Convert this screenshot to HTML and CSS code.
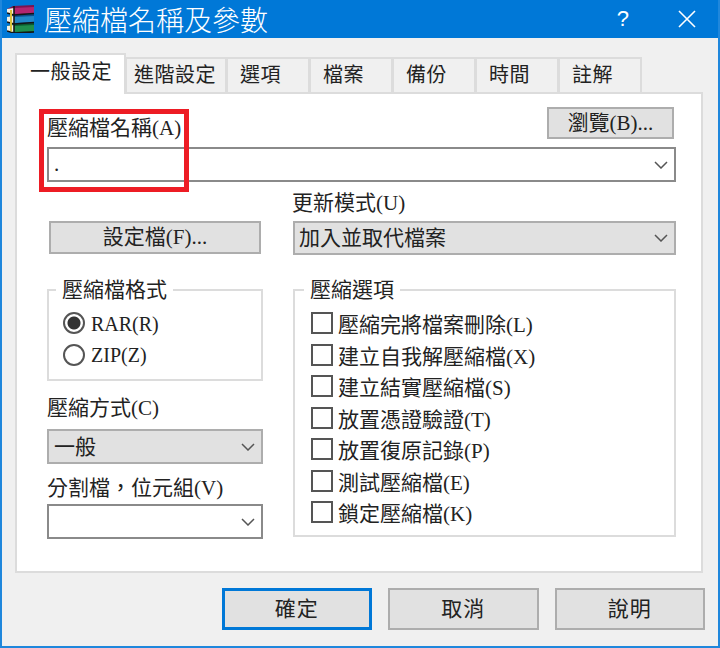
FILE: index.html
```html
<!DOCTYPE html>
<html lang="zh-Hant">
<head>
    <meta charset="UTF-8">
    <title>壓縮檔名稱及參數</title>
    <link rel="stylesheet" href="styles.css">
</head>
<body>
    <div class="window">
        <!-- Title bar -->
        <div class="titlebar">
            <svg class="app-icon" viewBox="0 0 28 28" width="28" height="28">
                <path d="M0 4 L6 1 L27 0 L27 8 L7 10 L0 8 Z" fill="#7c1450"/>
                <path d="M7 3 L27 2 L27 8 L7 9 Z" fill="#b3256f"/>
                <path d="M0 12 L7 10 L27 9 L27 18 L7 19 L0 17 Z" fill="#0c4f8c"/>
                <path d="M7 12 L27 11 L27 17 L7 18 Z" fill="#2288c8"/>
                <path d="M0 21 L7 19 L27 18 L27 27 L7 28 L0 26 Z" fill="#0b5a30"/>
                <path d="M7 21 L27 20 L27 26 L7 27 Z" fill="#1f8f4c"/>
                <path d="M0 4 L7 3 L7 10 L0 8 Z M0 12 L7 11 L7 19 L0 17 Z M0 21 L7 20 L7 28 L0 26 Z" fill="#f4f1e4"/>
                <path d="M7 1 V28 M0 8 L7 10 L27 8.500 M0 17 L7 19 L27 17.500 M0 26 L7 28 L27 27" stroke="#151515" stroke-width="1.600" fill="none"/>
                <path d="M3 5 L5 5 L5 27 L3 26 Z" fill="#d9c23c"/>
            </svg>
            <div class="title-text">壓縮檔名稱及參數</div>
            <div class="help-btn">?</div>
            <svg class="close-btn" viewBox="0 0 18 18" width="18" height="18">
                <path d="M1 1 L17 17 M17 1 L1 17" stroke="#fff" stroke-width="1.600" fill="none"/>
            </svg>
        </div>

        <div class="content">
            <!-- Tabs -->
            <div class="tabs">
                <div class="tab tab-active">一般設定</div>
                <div class="tab tab-wide">進階設定</div>
                <div class="tab">選項</div>
                <div class="tab">檔案</div>
                <div class="tab">備份</div>
                <div class="tab">時間</div>
                <div class="tab">註解</div>
            </div>

            <div class="panel">
                <div class="name-row">
                    <div class="label">壓縮檔名稱(A)</div>
                    <div class="btn btn-browse">瀏覽(B)...</div>
                </div>
                <div class="combo combo-name">
                    <span>.</span>
                    <svg class="chevron" viewBox="0 0 14 8" width="14" height="8"><path d="M1 1 L7 7 L13 1" stroke="#555" stroke-width="1.500" fill="none"/></svg>
                </div>

                <div class="columns">
                    <div class="col">
                        <div class="btn btn-config">設定檔(F)...</div>

                        <div class="group group-format">
                            <div class="group-title">壓縮檔格式</div>
                            <div class="option"><span class="radio radio-on"></span><span class="option-latin">RAR(R)</span></div>
                            <div class="option"><span class="radio"></span><span class="option-latin">ZIP(Z)</span></div>
                        </div>

                        <div class="label label-method">壓縮方式(C)</div>
                        <div class="combo combo-grey combo-method">
                            <span class="combo-text">一般</span>
                            <svg class="chevron" viewBox="0 0 14 8" width="14" height="8"><path d="M1 1 L7 7 L13 1" stroke="#555" stroke-width="1.500" fill="none"/></svg>
                        </div>

                        <div class="label label-split">分割檔，位元組(V)</div>
                        <div class="combo combo-split">
                            <span></span>
                            <svg class="chevron" viewBox="0 0 14 8" width="14" height="8"><path d="M1 1 L7 7 L13 1" stroke="#555" stroke-width="1.500" fill="none"/></svg>
                        </div>
                    </div>

                    <div class="col">
                        <div class="label label-mode">更新模式(U)</div>
                        <div class="combo combo-grey combo-mode">
                            <span class="combo-text">加入並取代檔案</span>
                            <svg class="chevron" viewBox="0 0 14 8" width="14" height="8"><path d="M1 1 L7 7 L13 1" stroke="#555" stroke-width="1.500" fill="none"/></svg>
                        </div>

                        <div class="group group-options">
                            <div class="group-title">壓縮選項</div>
                            <div class="option"><span class="check"></span>壓縮完將檔案刪除(L)</div>
                            <div class="option"><span class="check"></span>建立自我解壓縮檔(X)</div>
                            <div class="option"><span class="check"></span>建立結實壓縮檔(S)</div>
                            <div class="option"><span class="check"></span>放置憑證驗證(T)</div>
                            <div class="option"><span class="check"></span>放置復原記錄(P)</div>
                            <div class="option"><span class="check"></span>測試壓縮檔(E)</div>
                            <div class="option"><span class="check"></span>鎖定壓縮檔(K)</div>
                        </div>
                    </div>
                </div>

                <!-- Red highlight drawn over the name field -->
                <div class="highlight"></div>
            </div>

            <!-- Bottom buttons -->
            <div class="footer">
                <div class="btn btn-footer btn-default">確定</div>
                <div class="btn btn-footer">取消</div>
                <div class="btn btn-footer">說明</div>
            </div>
        </div>
    </div>
</body>
</html>
```

FILE: styles.css
```css
/* General Reset */
* {
    box-sizing: border-box;
}

body {
    margin: 0;
    font-family: "Liberation Serif", "Noto Sans CJK TC", serif;
    font-size: 21px;
    color: #222;
}

/* Window */
.window {
    width: 720px;
    height: 648px;
    background: #f0f0f0;
    border: 2px solid #1f87dc;
    border-top: none;
    display: flex;
    flex-direction: column;
    overflow: hidden;
}

.titlebar {
    height: 38px;
    margin: 0 -2px;
    background: #0078d7;
    color: #fff;
    display: flex;
    align-items: center;
    padding-left: 7px;
    flex-shrink: 0;
}

.app-icon {
    flex-shrink: 0;
}

.title-text {
    font-family: "Noto Sans CJK TC", sans-serif;
    font-size: 28px;
    font-weight: 300;
    line-height: 38px;
    margin-left: 9px;
    flex: 1;
}

.help-btn {
    font-family: "Liberation Sans", sans-serif;
    font-size: 22px;
    margin-right: 49px;
}

.close-btn {
    margin-right: 24px;
}

/* Content */
.content {
    padding: 15px 15px 0 13px;
}

.tabs {
    display: flex;
    align-items: flex-end;
    height: 41px;
    position: relative;
    z-index: 1;
    margin-bottom: -2px;
}

.tab {
    width: 84px;
    height: 35px;
    margin: 0 0 2px -1px;
    padding-left: 12px;
    border: 2px solid #dcdcdc;
    border-bottom: none;
    font-family: "Noto Sans CJK TC", sans-serif;
    font-size: 20px;
    letter-spacing: 0.500px;
    line-height: 29px;
}

.tab-active {
    width: 111px;
    height: 41px;
    margin: 0;
    padding-left: 13px;
    background: #fff;
    line-height: 31px;
}

.tab-wide {
    width: 102px;
    padding-left: 7px;
}

/* Panel */
.panel {
    position: relative;
    height: 481px;
    background: #fff;
    border: 2px solid #dcdcdc;
    padding: 13px 25px 0 30px;
}

.name-row {
    display: flex;
    justify-content: space-between;
    align-items: flex-end;
}

.label {
    line-height: 22px;
    height: 22px;
}

/* Buttons */
.btn {
    background: #e1e1e1;
    border: 2px solid #adadad;
    display: flex;
    align-items: center;
    justify-content: center;
    line-height: 1;
}

.btn-browse {
    width: 127px;
    height: 32px;
    margin-right: 2px;
}

.btn-config {
    width: 212px;
    height: 33px;
    margin: 29px 0 0 2px;
}

/* Combo boxes */
.combo {
    height: 35px;
    border: 2px solid #8a8a8a;
    background: #fff;
    display: flex;
    align-items: center;
    justify-content: space-between;
    padding: 0 6px 0 5px;
}

.combo-text {
    margin-bottom: 4px;
}

.combo-grey {
    background: #e1e1e1;
    border-color: #adadad;
}

.combo-name {
    margin-top: 8px;
}

.combo-method {
    margin-top: 10px;
}

.combo-mode {
    height: 34px;
    margin-top: 7px;
    padding-left: 4px;
}

.combo-split {
    margin-top: 4px;
}

.chevron {
    flex-shrink: 0;
}

/* Columns below the name field */
.columns {
    display: grid;
    grid-template-columns: 216px 383px;
    column-gap: 30px;
    margin-top: 10px;
}

.label-mode {
    margin-left: -1px;
}

.label-method {
    margin-top: 16px;
}

.label-split {
    height: 23px;
    margin-top: 13px;
}

/* Group boxes */
.group {
    border: 2px solid #dcdcdc;
}

.group-title {
    width: fit-content;
    background: #fff;
    padding: 0 6px;
    line-height: 24px;
    margin: -13px 0 0 -7px;
}

.group-format {
    height: 92px;
    margin-top: 35px;
    padding-left: 14px;
}

.group-options {
    height: 248px;
    margin-top: 34px;
    padding-left: 16px;
}

.option {
    display: flex;
    align-items: center;
    height: 22px;
    margin-top: 9.500px;
}

.group-title + .option {
    margin-top: 10px;
}

.option-latin {
    font-size: 20px;
    margin-top: 2px;
}

.radio {
    width: 22px;
    height: 22px;
    border: 2px solid #555;
    border-radius: 50%;
    margin-right: 6px;
    flex-shrink: 0;
}

.radio-on {
    background: radial-gradient(circle, #333 0, #333 6px, #fff 7px);
}

.check {
    width: 22px;
    height: 22px;
    border: 2px solid #555;
    margin-right: 5px;
    flex-shrink: 0;
}

/* Highlight */
.highlight {
    position: absolute;
    left: 22px;
    top: 15px;
    width: 150px;
    height: 83px;
    border: 5px solid #ed1c24;
}

/* Footer */
.footer {
    display: flex;
    justify-content: flex-end;
    gap: 16px;
    margin: 15px -2px 0 0;
}

.btn-footer {
    width: 150.500px;
    height: 42px;
    letter-spacing: 1px;
}

.btn-default {
    border: 3px solid #0078d7;
}
```
